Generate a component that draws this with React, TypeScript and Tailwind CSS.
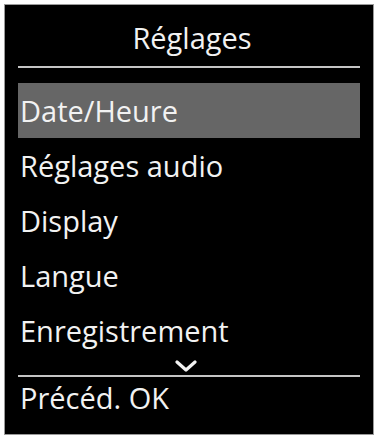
const items = ['Date/Heure', 'Réglages audio', 'Display', 'Langue', 'Enregistrement'];

export default function App() {
  return (
    <div
      className="w-[376px] h-[437px] bg-white p-[4px]"
      style={{ fontFamily: '"Open Sans", "Noto Sans", sans-serif' }}
    >
      <div className="w-[370px] h-[431px] bg-black border border-[#9a9a9a] flex flex-col text-[#f2f2f2] text-[29px] leading-[40px]">
        <div className="pt-[13px] text-center pl-[6px]">Réglages</div>
        <div className="mx-[13px] mt-[8px] h-[2px] bg-[#c4c4c4]" />
        <ul className="mt-[15px] flex flex-col">
          {items.map((label, i) => (
            <li
              key={label}
              className={
                i === 0
                  ? 'mx-[13px] h-[55px] pl-[2px] flex items-center bg-[#666666]'
                  : 'mx-[13px] h-[55px] pl-[2px] flex items-center'
              }
            >
              {label}
            </li>
          ))}
        </ul>
        <div className="mt-[2px] h-[12px] flex justify-center pr-[6px]">
          <svg width="22" height="12" viewBox="0 0 22 12" fill="none">
            <path
              d="M2 2 L11 10 L20 2"
              stroke="#f2f2f2"
              strokeWidth="3.2"
              strokeLinecap="round"
              strokeLinejoin="round"
            />
          </svg>
        </div>
        <div className="mx-[13px] mt-[3px] h-[2px] bg-[#c4c4c4]" />
        <div className="pl-[15px] pt-[1px]">Précéd. OK</div>
      </div>
    </div>
  );
}
